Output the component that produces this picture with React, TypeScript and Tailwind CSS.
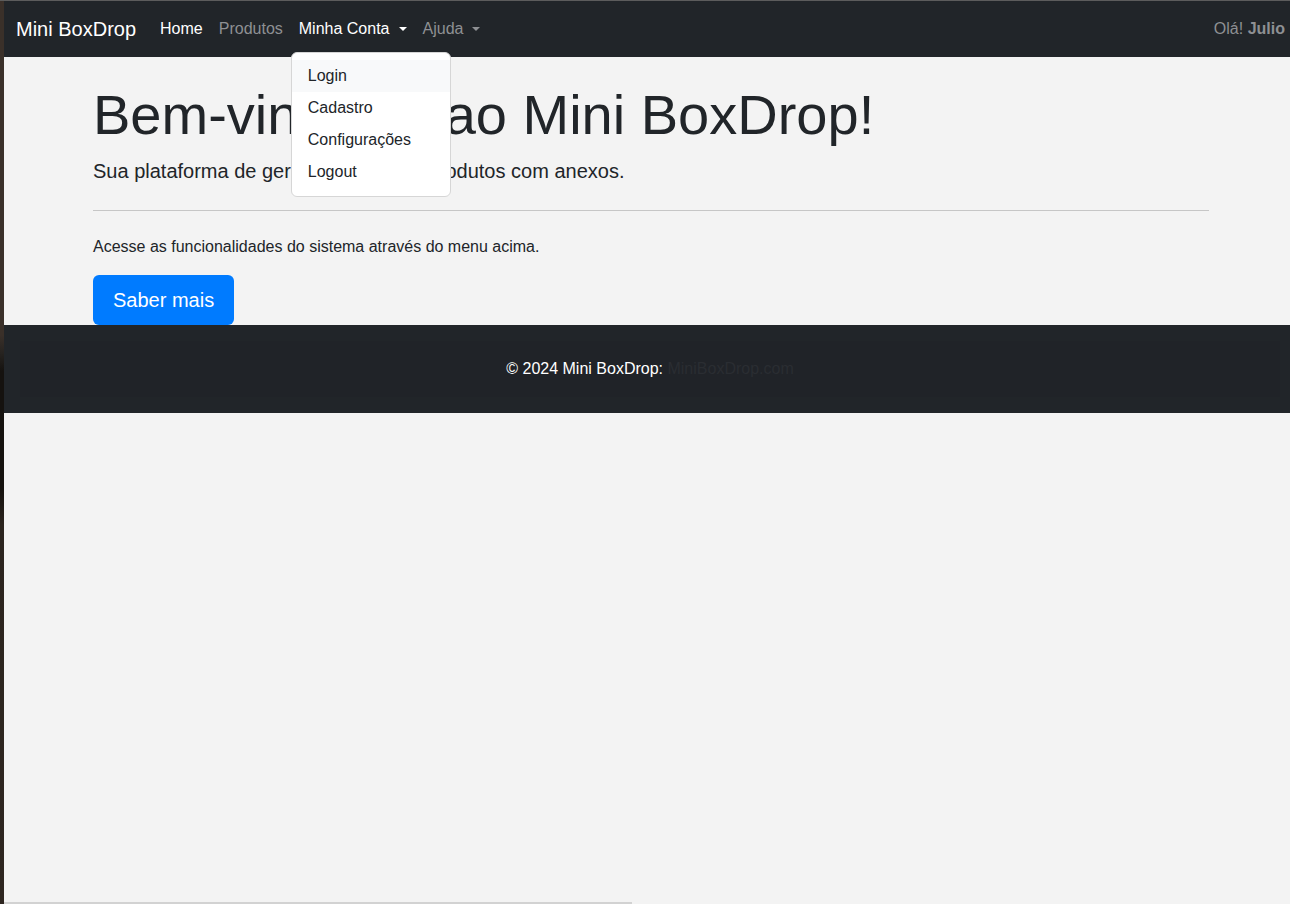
import React from "react";

export default function App() {
  const font = { fontFamily: '"Liberation Sans", Arial, sans-serif' };
  return (
    <div className="w-[1290px] h-[904px] flex flex-col overflow-hidden bg-[#f3f3f3]" style={font}>
      <div className="h-[1px] w-full bg-[#5c5c5c] shrink-0" />
      <div className="flex flex-1 min-h-0">
        <div className="w-[4px] shrink-0 bg-[linear-gradient(to_bottom,#3a3029_0%,#3a3029_37%,#262320_39%,#15120f_41%,#15120f_54%,#2b241e_58%,#2e2620_100%)]" />
        <div className="flex-1 flex flex-col min-w-0">
          {/* Navbar */}
          <nav className="h-[56px] bg-[#212529] flex items-center pl-[12px] pr-[5px] shrink-0 relative z-10">
            <span className="text-[20px] text-white leading-[30px] mr-[16px]">Mini BoxDrop</span>
            <ul className="flex items-center text-[16px] leading-[24px]">
              <li className="px-[8px] py-[8px] text-white">Home</li>
              <li className="px-[8px] py-[8px] text-[#8e9093]">Produtos</li>
              <li className="relative">
                <div className="px-[8px] py-[8px] text-white flex items-center">
                  Minha Conta
                  <span className="ml-[9px] inline-block w-0 h-0 border-l-[4px] border-r-[4px] border-t-[4px] border-l-transparent border-r-transparent border-t-white" />
                </div>
                <div className="absolute left-0 top-[43px] w-[160px] bg-white border border-[#d6d6d6] rounded-[6px] pt-[7px] pb-[8px] text-[#212529]">
                  <div className="h-[32px] px-[16px] flex items-center bg-[#f8f9fa]">Login</div>
                  <div className="h-[32px] px-[16px] flex items-center">Cadastro</div>
                  <div className="h-[32px] px-[16px] flex items-center">Configurações</div>
                  <div className="h-[32px] px-[16px] flex items-center">Logout</div>
                </div>
              </li>
              <li className="px-[8px] py-[8px] text-[#8e9093] flex items-center">
                Ajuda
                <span className="ml-[9px] inline-block w-0 h-0 border-l-[4px] border-r-[4px] border-t-[4px] border-l-transparent border-r-transparent border-t-[#8e9093]" />
              </li>
            </ul>
            <div className="ml-auto text-[16px] text-[#8e9093]">
              Olá! <b className="font-bold">Julio</b>
            </div>
          </nav>

          {/* Main */}
          <main className="pl-[89px] pt-[24px] shrink-0">
            <div className="w-[1116px] text-[#212529]">
              <h1 className="text-[56px] leading-[1.2] mb-[8px] whitespace-nowrap">Bem-vindo(a) ao Mini BoxDrop!</h1>
              <p className="text-[20px] leading-[30px]">Sua plataforma de gerenciamento de produtos com anexos.</p>
              <hr className="mt-[24px] border-0 border-t border-[#c6c6c6]" />
              <p className="mt-[24px] text-[16px] leading-[24px] mb-[16px]">
                Acesse as funcionalidades do sistema através do menu acima.
              </p>
              <button className="bg-[#007bff] text-white text-[20px] leading-[30px] px-[20px] py-[10px] rounded-[6px]">
                Saber mais
              </button>
            </div>
          </main>

          {/* Footer */}
          <footer className="bg-[#212529] pl-[16px] pr-[10px] py-[16px] shrink-0">
            <div className="h-[56px] bg-[#202328] flex items-center justify-center text-[16px] text-white">
              © 2024 Mini BoxDrop:&nbsp;<span className="text-[#2a2d32]">MiniBoxDrop.com</span>
            </div>
          </footer>

          <div className="flex-1" />
          <div className="h-[2px] w-[628px] bg-[#d2d2d2] shrink-0" />
        </div>
      </div>
    </div>
  );
}
